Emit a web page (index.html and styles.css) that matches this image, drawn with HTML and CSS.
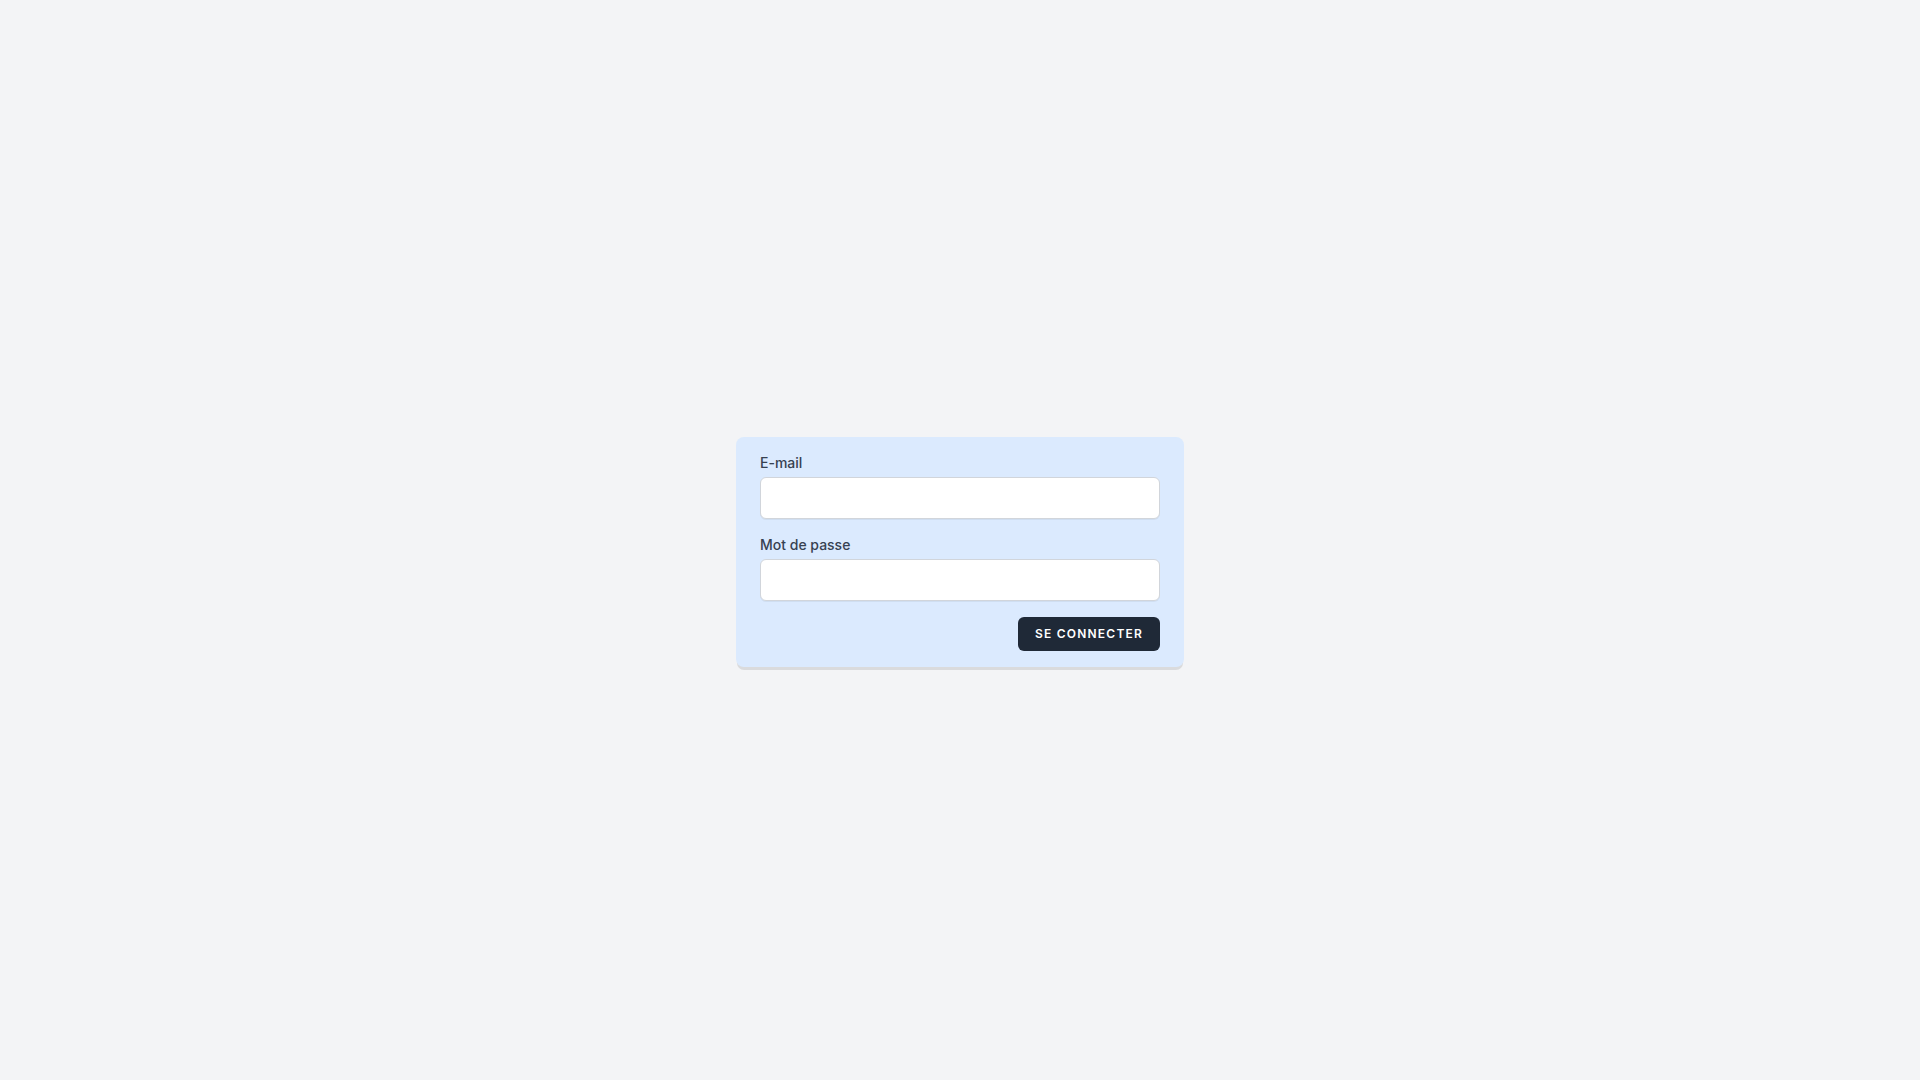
FILE: index.html
```html
<!DOCTYPE html>
<html lang="fr">
<head>
<meta charset="UTF-8" />
<meta name="viewport" content="width=device-width, initial-scale=1" />
<title>Connexion</title>
<link rel="stylesheet" href="styles.css">
</head>
<body>
<main class="login-card">
  <form class="login-form" method="post">
    <div class="field">
      <label for="email">E-mail</label>
      <input type="email" id="email" name="email" required autocomplete="username" />
    </div>
    <div class="field">
      <label for="password">Mot de passe</label>
      <input type="password" id="password" name="password" required autocomplete="current-password" />
    </div>
    <div class="actions">
      <button type="submit" class="btn-primary">Se connecter</button>
    </div>
  </form>
</main>
</body>
</html>
```

FILE: styles.css
```css
* {
  box-sizing: border-box;
}
body {
  margin: 0;
  min-height: 100vh;
  display: flex;
  flex-direction: column;
  align-items: center;
  justify-content: center;
  background: #f3f4f6;
  color: #111827;
  font-family: Inter, "Liberation Sans", sans-serif;
  line-height: 24px;
  -webkit-font-smoothing: antialiased;
}
.login-card {
  width: 100%;
  max-width: 448px;
  margin-top: 24px;
  padding: 16px 24px;
  background: #dbeafe;
  border-radius: 8px;
  box-shadow: 0 4px 0 -1px rgba(0,0,0,0.1);
}
.login-form {
  display: flex;
  flex-direction: column;
  gap: 16px;
}
.field {
  display: flex;
  flex-direction: column;
  gap: 4px;
}
.field label {
  font-size: 14px;
  line-height: 20px;
  font-weight: 500;
  color: #374151;
}
.field input {
  width: 100%;
  padding: 8px 12px;
  border: 1px solid #d1d5db;
  border-radius: 6px;
  background: #fff;
  color: inherit;
  font-family: inherit;
  font-size: 16px;
  line-height: 24px;
  box-shadow: 0 1px 0 rgba(0,0,0,0.05);
}
.field input:focus {
  outline: none;
  border-color: #6366f1;
  box-shadow: 0 0 0 1px #6366f1;
}
.actions {
  display: flex;
  justify-content: flex-end;
}
.btn-primary {
  padding: 8px 16px;
  border: 1px solid transparent;
  border-radius: 6px;
  background: #1f2937;
  color: #fff;
  font-family: inherit;
  font-size: 12px;
  line-height: 16px;
  font-weight: 600;
  letter-spacing: 0.1em;
  text-transform: uppercase;
  cursor: pointer;
  transition: background 0.15s ease-in-out;
}
.btn-primary:hover {
  background: #374151;
}
```
